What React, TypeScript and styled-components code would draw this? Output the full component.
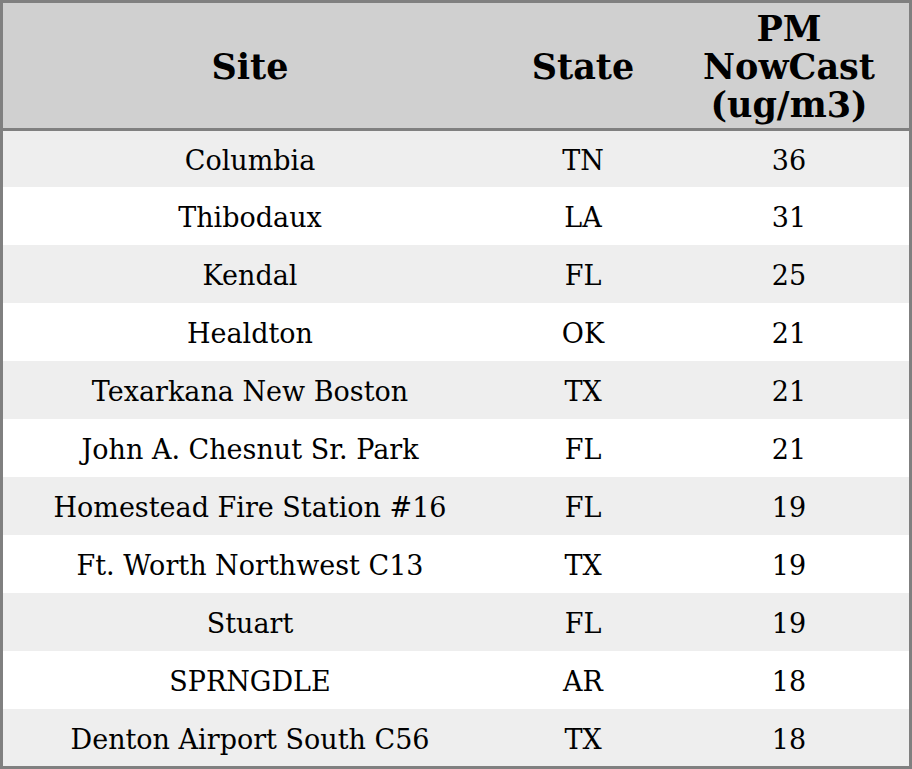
import React from "react";
import styled, { createGlobalStyle } from "styled-components";

const Global = createGlobalStyle`
  html, body { margin: 0; padding: 0; background: #fff; }
  body { font-family: "DejaVu Serif", serif; }
`;

const Table = styled.div`
  box-sizing: border-box;
  width: 912px;
  height: 769px;
  border: 3px solid #808080;
  display: flex;
  flex-direction: column;
  font-family: "DejaVu Serif", serif;
  color: #000;
`;

const Header = styled.div`
  display: grid;
  grid-template-columns: 494px 172px 240px;
  height: 125px;
  background: #d0d0d0;
  border-bottom: 3px solid #808080;
`;

const HeadCell = styled.div`
  display: flex;
  align-items: center;
  justify-content: center;
  text-align: center;
  font-weight: bold;
  font-size: 35px;
  line-height: 38px;
  padding-top: 2px;
`;

const Row = styled.div<{ $alt: boolean }>`
  display: grid;
  grid-template-columns: 494px 172px 240px;
  height: 58px;
  background: ${(p) => (p.$alt ? "#eeeeee" : "#ffffff")};
  &:first-child { height: 56px; }
  &:last-child { height: 57px; }
`;

const Body = styled.div`
  display: flex;
  flex-direction: column;
`;

const Cell = styled.div`
  display: flex;
  align-items: center;
  justify-content: center;
  font-size: 27px;
  line-height: 32px;
  padding-top: 4px;
  white-space: nowrap;
`;

const rows: [string, string, number][] = [
  ["Columbia", "TN", 36],
  ["Thibodaux", "LA", 31],
  ["Kendal", "FL", 25],
  ["Healdton", "OK", 21],
  ["Texarkana New Boston", "TX", 21],
  ["John A. Chesnut Sr. Park", "FL", 21],
  ["Homestead Fire Station #16", "FL", 19],
  ["Ft. Worth Northwest C13", "TX", 19],
  ["Stuart", "FL", 19],
  ["SPRNGDLE", "AR", 18],
  ["Denton Airport South C56", "TX", 18],
];

export default function App() {
  return (
    <>
      <Global />
      <Table>
        <Header>
          <HeadCell>Site</HeadCell>
          <HeadCell>State</HeadCell>
          <HeadCell>
            PM
            <br />
            NowCast
            <br />
            (ug/m3)
          </HeadCell>
        </Header>
        <Body>
          {rows.map(([site, st, v], i) => (
            <Row key={site} $alt={i % 2 === 0}>
              <Cell>{site}</Cell>
              <Cell>{st}</Cell>
              <Cell>{v}</Cell>
            </Row>
          ))}
        </Body>
      </Table>
    </>
  );
}
